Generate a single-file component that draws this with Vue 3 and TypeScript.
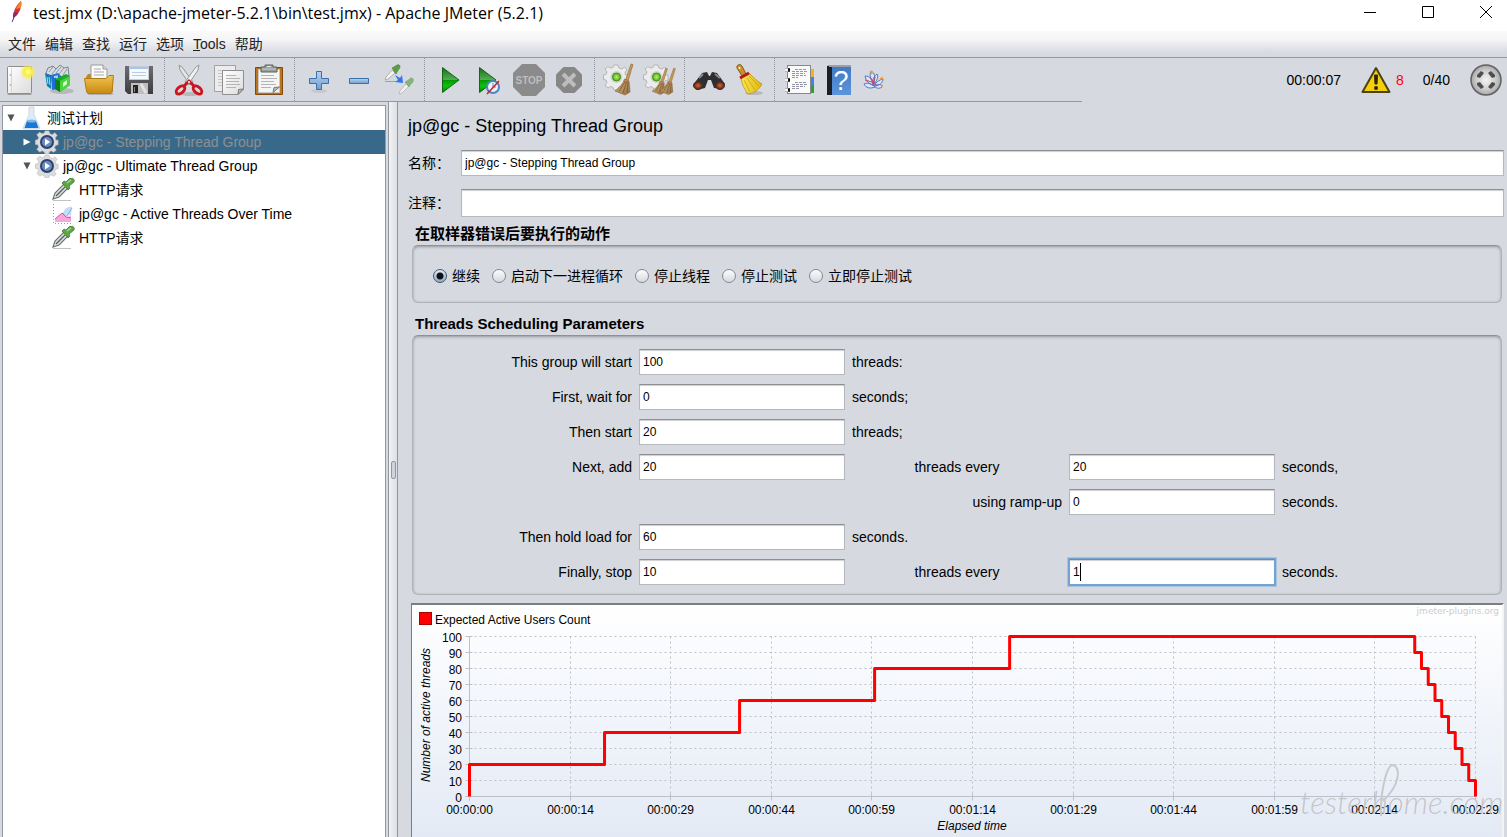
<script setup lang="ts">
import { computed, reactive, ref } from 'vue'

const menus = ['文件', '编辑', '查找', '运行', '选项', 'Tools', '帮助']

const toolGroups: string[][] = [
  ['new', 'templates', 'open', 'save'],
  ['cut', 'copy', 'paste'],
  ['expand', 'collapse', 'toggle'],
  ['start', 'start-now', 'stop', 'shutdown'],
  ['clear', 'clear-all'],
  ['search', 'reset-search'],
  ['functions', 'help', 'about'],
]

interface TreeNode {
  label: string
  depth: number
  icon: 'plan' | 'group' | 'request' | 'graph'
  open?: boolean
  selected?: boolean
}

const tree: TreeNode[] = [
  { label: '测试计划', depth: 0, icon: 'plan', open: true },
  { label: 'jp@gc - Stepping Thread Group', depth: 1, icon: 'group', open: false, selected: true },
  { label: 'jp@gc - Ultimate Thread Group', depth: 1, icon: 'group', open: true },
  { label: 'HTTP请求', depth: 2, icon: 'request' },
  { label: 'jp@gc - Active Threads Over Time', depth: 2, icon: 'graph' },
  { label: 'HTTP请求', depth: 2, icon: 'request' },
]

const name = ref('jp@gc - Stepping Thread Group')
const comment = ref('')
const onError = ref('继续')
const errorActions = ['继续', '启动下一进程循环', '停止线程', '停止测试', '立即停止测试']

const form = reactive({
  total: '100',
  delay: '0',
  first: '20',
  add: '20',
  addEvery: '20',
  rampUp: '0',
  hold: '60',
  stop: '10',
  stopEvery: '1',
})

const left = 57.5
const right = 1063.5
const top = 31.5
const bottom = 191.5
const duration = 149

const xAt = (seconds: number) => left + (seconds / duration) * (right - left)
const yAt = (threads: number) => bottom - (threads / 100) * (bottom - top)

const yTicks = Array.from({ length: 11 }, (_, i) => ({ value: i * 10, y: yAt(i * 10) }))

const xTicks = Array.from({ length: 11 }, (_, i) => {
  const s = Math.floor((duration * i) / 10)
  const mm = String(Math.floor(s / 60)).padStart(2, '0')
  const ss = String(s % 60).padStart(2, '0')
  return { label: `00:${mm}:${ss}`, x: Math.floor(left + ((right - left) * i) / 10) + 0.5 }
})

const line = computed(() => {
  const pts: [number, number][] = [[0, 0]]
  let n = 0
  let t = 0
  while (n < 100) {
    pts.push([t, n + 20])
    n += 20
    t += 20
    if (n < 100) pts.push([t, n])
  }
  t = 140
  pts.push([t, 100])
  for (n = 90; n >= 10; n -= 10) {
    pts.push([t, n], [t + 1, n])
    t += 1
  }
  pts.push([duration, 0])
  return pts.map(([s, v]) => `${xAt(s)},${yAt(v)}`).join(' ')
})
</script>

<template>
  <div class="window">
    <header class="titlebar">
      <svg class="app-icon" width="12" height="22" viewBox="0 0 12 22">
        <path d="M1 21 L4 14" stroke="#5b2d86" stroke-width="1" fill="none" />
        <path d="M2 17 C2 12 4 5 10 0 C11 3 10 9 6 14 Z" fill="#d6303a" />
        <path d="M5 8 C6 5 8 2 10 0 C11 2 10 5 10 7 Z" fill="#f08a24" />
        <path d="M2 17 C2 15 2 13 3 11 L7 12 L5 15 Z" fill="#8c2a6b" />
      </svg>
      <span class="title">test.jmx (D:\apache-jmeter-5.2.1\bin\test.jmx) - Apache JMeter (5.2.1)</span>
      <div class="window-buttons">
        <button type="button" aria-label="Minimize"><svg width="12" height="12"><path d="M0 6.5H12" /></svg></button>
        <button type="button" aria-label="Maximize"><svg width="12" height="12"><path d="M.5 .5H11.5V11.5H.5Z" /></svg></button>
        <button type="button" aria-label="Close"><svg width="12" height="12"><path d="M0 0L12 12M12 0L0 12" /></svg></button>
      </div>
    </header>

    <nav class="menubar">
      <button v-for="m in menus" :key="m" type="button">
        <template v-if="m === 'Tools'"><u>T</u>ools</template>
        <template v-else>{{ m }}</template>
      </button>
    </nav>

    <div class="toolbar">
      <svg class="defs" width="0" height="0" aria-hidden="true">
        <defs>
          <linearGradient id="gPaper" x1="0" y1="0" x2="1" y2="1"><stop offset="0" stop-color="#fff" /><stop offset="1" stop-color="#dcdcdc" /></linearGradient>
          <linearGradient id="gFolder" x1="0" y1="0" x2="0" y2="1"><stop offset="0" stop-color="#f0c350" /><stop offset="1" stop-color="#c98a10" /></linearGradient>
          <linearGradient id="gDisk" x1="0" y1="0" x2="0" y2="1"><stop offset="0" stop-color="#6e6e70" /><stop offset="1" stop-color="#3c3c3e" /></linearGradient>
          <linearGradient id="gBlue" x1="0" y1="0" x2="0" y2="1"><stop offset="0" stop-color="#b9d3ec" /><stop offset="1" stop-color="#6f9fd0" /></linearGradient>
          <linearGradient id="gPlay" x1="0" y1="0" x2="0" y2="1"><stop offset="0" stop-color="#1d6b1d" /><stop offset=".48" stop-color="#4fae4f" /><stop offset=".52" stop-color="#059a05" /><stop offset=".75" stop-color="#0cc40c" /><stop offset="1" stop-color="#067306" /></linearGradient>
          <linearGradient id="gBroom" x1="0" y1="0" x2="1" y2="1"><stop offset="0" stop-color="#d6b483" /><stop offset="1" stop-color="#96703f" /></linearGradient>
          <linearGradient id="gYellow" x1="0" y1="0" x2="1" y2="0"><stop offset="0" stop-color="#fbe94e" /><stop offset="1" stop-color="#dfb512" /></linearGradient>
          <linearGradient id="gBook" x1="0" y1="0" x2="0" y2="1"><stop offset="0" stop-color="#3f77c4" /><stop offset="1" stop-color="#5c95dc" /></linearGradient>
          <radialGradient id="gSun"><stop offset="0" stop-color="#ffffa0" /><stop offset=".5" stop-color="#f9ee3a" /><stop offset="1" stop-color="#f9ee3a" stop-opacity="0" /></radialGradient>
          <radialGradient id="gGreen"><stop offset="0" stop-color="#b6f56a" /><stop offset="1" stop-color="#4fae1a" /></radialGradient>
          <radialGradient id="gLens"><stop offset="0" stop-color="#d0683a" /><stop offset="1" stop-color="#5a1d0c" /></radialGradient>
          <radialGradient id="gBall"><stop offset="0" stop-color="#f4f4f4" /><stop offset=".6" stop-color="#cfcfcf" /><stop offset=".9" stop-color="#b2b2b2" /><stop offset="1" stop-color="#8a8a8a" /></radialGradient>
          <g id="cog">
            <path d="M-2 -12H2L3 -9L6 -8L8.500 -10L11 -7L9 -5L9.500 -2H12V3L9.500 3.500L8 6L10 9L7 11L4.500 9.500L2.500 10.500L2 13H-2L-3 10.500L-5.500 9.500L-8 11L-11 8L-9 5.500L-10 3L-12.500 2.500V-2L-10 -2.500L-9 -5L-11 -8L-8 -10.500L-5.500 -9L-3 -9.500Z" />
          </g>
          <g id="broom">
            <path d="M9 -15L11 -14.500L6 2L3.500 1Z" fill="#c99a5d" stroke="#8b6330" stroke-width=".6" />
            <path d="M2.500 0L7 2L8 13L3 16L-7 12C-3 9 1 5 2.500 0Z" fill="url(#gBroom)" stroke="#80602f" stroke-width=".6" />
            <path d="M3 3L-3 12M4.500 3L1 14M6 4L5 14" stroke="#6e4f26" stroke-width=".7" fill="none" />
            <path d="M2 2L7 4" stroke="#b5524a" stroke-width="1" />
          </g>
          <g id="dropper">
            <path d="M1 20L3 14L12 5L16 9L7 18Z" fill="#dfe4e4" stroke="#6c7474" stroke-width="1.200" />
            <path d="M4 17L13 8" stroke="#59615f" stroke-width="1.500" />
            <path d="M10 4L12 2L14 3L18 -1C21 -2 23 1 22 3L17 7L18 9L16 11Z" fill="#5fa548" stroke="#3f7d2c" stroke-width=".8" />
            <path d="M15 4L19 1" stroke="#a4d78f" stroke-width="1.500" />
          </g>
        </defs>
      </svg>

      <div class="tools">
        <div v-for="(group, gi) in toolGroups" :key="gi" class="tool-group">
          <button v-for="tool in group" :key="tool" type="button" class="tool" :class="tool" :aria-label="tool">
            <svg v-if="tool === 'new'" viewBox="0 0 32 32">
              <path d="M3.500 30.500H27.500" stroke="#777" opacity=".6" />
              <rect x="3.500" y="2.500" width="24" height="27" rx="1" fill="url(#gPaper)" stroke="#8d8d8d" />
              <path d="M7.500 4V28" stroke="#d5d5d5" /><circle cx="6.500" cy="11" r="1" fill="#bbb" /><circle cx="6.500" cy="21" r="1" fill="#bbb" />
              <circle cx="24" cy="8" r="8" fill="url(#gSun)" />
            </svg>
            <svg v-else-if="tool === 'templates'" viewBox="0 0 32 32">
              <ellipse cx="18" cy="27" rx="12" ry="3" fill="#888" opacity=".4" />
              <path d="M2 9L4 4L9 2L12 5L16 1L20 4L24 3L25 12L13 15L3 12Z" fill="#d8dde2" stroke="#76828e" />
              <path d="M5 8L9 3M8 10L12 5M12 9L17 3M15 10L20 4M19 11L23 5" stroke="#8c98a3" stroke-width="1" />
              <path d="M1 9L7 11V25L3 22Z" fill="#147bb0" /><path d="M3 13L4 20M5 13L6 21" stroke="#90dff5" stroke-width="1" />
              <path d="M7 11L14 9L17 12V24L8 26Z" fill="#1c6fd6" /><path d="M10 13L13 12.500V20" stroke="#a9d4ff" stroke-width="2" fill="none" />
              <path d="M11 15L22 10L26 12V21L16 28L11 25Z" fill="#1faa2b" /><path d="M11 15L16 17V28L11 25Z" fill="#0e7f1b" /><path d="M16 17L26 12V21L16 28Z" fill="#4bd53d" /><path d="M19 19L23 16V20L19 23Z" fill="#d9fbcf" />
            </svg>
            <svg v-else-if="tool === 'open'" viewBox="0 0 32 32">
              <path d="M2 29H30L28 31H5Z" fill="#777" opacity=".4" />
              <path d="M2 13L4 10H11L13 13H29V28H2Z" fill="#c18a1c" />
              <path d="M7 1H19L23 5V17H7Z" fill="#fafafa" stroke="#999" /><path d="M19 1V5H23" fill="#ddd" stroke="#999" />
              <path d="M10 5H17M10 8H20M10 11H20" stroke="#aaa" />
              <path d="M0.500 14.500H22L25 11.500H29.500L28 28Q27.500 29.500 26 29.500H5Q3 29.500 2.500 27Z" fill="url(#gFolder)" stroke="#b17d12" />
            </svg>
            <svg v-else-if="tool === 'save'" viewBox="0 0 32 32">
              <path d="M1 2H29V30H4L1 27Z" fill="url(#gDisk)" />
              <rect x="5.500" y="2.500" width="19" height="13" fill="#f4f8ff" stroke="#c2cbd8" /><path d="M6 4H24" stroke="#a9c6ea" stroke-width="2" /><path d="M8 8.500H22M8 11.500H22" stroke="#bccbe0" />
              <rect x="7" y="19" width="17" height="11" fill="#bebebe" /><rect x="9" y="21" width="5" height="8" fill="#222" /><path d="M10.500 23V28" stroke="#888" /><path d="M17 20L22 29" stroke="#e2e2e2" stroke-width="3" />
            </svg>
            <svg v-else-if="tool === 'cut'" viewBox="0 0 32 32">
              <ellipse cx="16" cy="30" rx="9" ry="2" fill="#888" opacity=".4" />
              <path d="M5 1L8 3L19 18L16 21L6 6Z" fill="#e3e6e6" stroke="#949898" /><path d="M25 1L22 3L11 18L14 21L24 6Z" fill="#f1f3f3" stroke="#949898" />
              <ellipse cx="6.500" cy="26" rx="3" ry="5" transform="rotate(50 6.500 26)" fill="none" stroke="#cb1620" stroke-width="3" /><ellipse cx="23.500" cy="26" rx="3" ry="5" transform="rotate(-50 23.500 26)" fill="none" stroke="#cb1620" stroke-width="3" />
              <path d="M10 22L15 17L20 22" fill="none" stroke="#cb1620" stroke-width="3" /><circle cx="15" cy="18" r="1" fill="#fff" />
            </svg>
            <svg v-else-if="tool === 'copy'" viewBox="0 0 32 32">
              <path d="M.5 1.500H21.500V27.500H.5Z" fill="#ececec" stroke="#a2a2a2" /><path d="M4 6.500H16M4 9.500H8M4 12.500H8M4 15.500H8M4 18.500H8M4 21.500H8" stroke="#c5c5c5" />
              <path d="M8.500 6.500H29.500V25L24 30.500H8.500Z" fill="url(#gPaper)" stroke="#8e8e8e" /><path d="M12 11.500H22M12 14.500H26M12 17.500H25M12 20.500H26M12 23.500H22" stroke="#b4b4b4" /><path d="M24 30.500L24.500 25.500L29.500 25Z" fill="#bbb" stroke="#777" />
            </svg>
            <svg v-else-if="tool === 'paste'" viewBox="0 0 32 32">
              <path d="M1.500 3.500H28.500V30.500H1.500Z" fill="#b9741c" stroke="#80490b" /><path d="M4.500 5.500H25.500V28.500H4.500Z" fill="#f5f5f5" stroke="#c9c9c9" />
              <path d="M7 11.500H20M7 14.500H23M7 17.500H20M7 20.500H22M7 23.500H17" stroke="#b4b4b4" /><path d="M19 28.500L20 23.500L25.500 23Z" fill="#bbb" stroke="#777" />
              <path d="M11 1H19V3H23V8H7V3H11Z" fill="#9aa09a" stroke="#5b605b" /><path d="M8 5H22" stroke="#c6cac6" /><path d="M13 2.500H17" stroke="#e9e9e9" />
            </svg>
            <svg v-else-if="tool === 'expand'" viewBox="0 0 32 32">
              <ellipse cx="15" cy="27" rx="8" ry="2" fill="#999" opacity=".25" />
              <path d="M12.500 7.500H17.500V14.500H24.500V19.500H17.500V25.500H12.500V19.500H5.500V14.500H12.500Z" fill="url(#gBlue)" stroke="#396fad" />
            </svg>
            <svg v-else-if="tool === 'collapse'" viewBox="0 0 32 32"><path d="M5.500 14.500H24.500V19.500H5.500Z" fill="url(#gBlue)" stroke="#396fad" /></svg>
            <svg v-else-if="tool === 'toggle'" viewBox="0 0 32 32">
              <path d="M1 17.500H15" stroke="#888" opacity=".7" />
              <path d="M1 16L2 13L8 6L11 9L4 15Z" fill="#f3f3f3" stroke="#a2a2a2" stroke-width=".8" /><path d="M8 4L10 3L13 1C16 0 17 3 15 5L13 8L12 10Z" fill="#5a9e46" stroke="#477e38" stroke-width=".6" />
              <path d="M15 30L16 27L22 20L25 22L18 29Z" fill="#f2f2f2" stroke="#b4b4b4" stroke-width=".8" /><path d="M21 18L23 17L27 14C30 14 30 17 28 19L26 21L25 23Z" fill="#86b57c" stroke="#76a06c" stroke-width=".6" />
              <path d="M11 11L16 14L18 11L19 19L11 18L14 16Z" fill="#2f77ee" />
            </svg>
            <svg v-else-if="tool === 'start'" viewBox="0 0 32 32"><path d="M8.500 3.500L25 16L8.500 28.500Z" fill="url(#gPlay)" stroke="#14661a" /></svg>
            <svg v-else-if="tool === 'start-now'" viewBox="0 0 32 32">
              <path d="M5.500 3.500L22 16L5.500 28.500Z" fill="url(#gPlay)" stroke="#14661a" />
              <circle cx="19" cy="23" r="6" fill="#e9f1fb" stroke="#4d86c6" stroke-width="2" /><path d="M19 19V23H22" fill="none" stroke="#888" /><path d="M13 30L25 17" stroke="#d02020" stroke-width="1.500" />
            </svg>
            <svg v-else-if="tool === 'stop'" viewBox="0 0 32 32">
              <path d="M8 0H22L31 9V23L22 32H8L-1 23V9Z" fill="#8b8b8b" />
              <text x="15" y="20" text-anchor="middle" class="stop-text">STOP</text>
            </svg>
            <svg v-else-if="tool === 'shutdown'" viewBox="0 0 32 32">
              <path d="M9.500 3H20.500L28 10.500V21.500L20.500 29H9.500L2 21.500V10.500Z" fill="#878787" /><path d="M9 10L21 22M21 10L9 22" stroke="#bdbdbd" stroke-width="4" />
            </svg>
            <svg v-else-if="tool === 'clear'" viewBox="0 0 32 32">
              <use href="#cog" x="12" y="13" fill="#ececec" stroke="#a9a9a9" stroke-width=".8" /><circle cx="12.500" cy="13" r="6" fill="#cfd3cc" /><circle cx="12.500" cy="13" r="4" fill="url(#gGreen)" stroke="#4b8e24" />
              <use href="#broom" x="18" y="15" />
            </svg>
            <svg v-else-if="tool === 'clear-all'" viewBox="0 0 32 32">
              <use href="#cog" x="12" y="13" fill="#ececec" stroke="#a9a9a9" stroke-width=".8" /><circle cx="12.500" cy="13" r="6" fill="#cfd3cc" /><circle cx="12.500" cy="13" r="4" fill="url(#gGreen)" stroke="#4b8e24" />
              <g transform="translate(14 17) scale(.85)"><use href="#broom" /></g><g transform="translate(22 17) scale(.85)"><use href="#broom" /></g>
            </svg>
            <svg v-else-if="tool === 'search'" viewBox="0 0 32 32">
              <path d="M8 9L13 8L15 12H16L18 8L23 9L31 20L28 25L20 24L17 16H14L11 24L3 26L-1 21Z" fill="#2e2e30" />
              <path d="M5 14L9 10M21 10L26 14" stroke="#8c8c90" stroke-width="2" />
              <ellipse cx="4" cy="21.500" rx="4.500" ry="4" fill="url(#gLens)" stroke="#333" /><ellipse cx="26" cy="21.500" rx="4.500" ry="4" fill="url(#gLens)" stroke="#333" />
            </svg>
            <svg v-else-if="tool === 'reset-search'" viewBox="0 0 32 32">
              <ellipse cx="20" cy="29" rx="9" ry="2" fill="#888" opacity=".4" />
              <path d="M3 4C2 1 6 -1 8 2L12 10L8 12Z" fill="#c8912f" stroke="#8a5d17" /><circle cx="5.500" cy="4" r="1" fill="#fff" />
              <path d="M7 14L15 9C19 13 23 17 28 20C25 26 20 29 14 30C10 25 8 20 7 14Z" fill="url(#gYellow)" stroke="#b58d10" stroke-width=".7" /><path d="M10 16L16 28M13 14L21 26M15 12L25 22" stroke="#c9a31c" stroke-width=".8" fill="none" />
              <path d="M6 14L15 9" stroke="#b51919" stroke-width="3" />
            </svg>
            <svg v-else-if="tool === 'functions'" viewBox="0 0 32 32">
              <path d="M26 5H30V13H26Z" fill="#f3b321" /><path d="M26 13H30V21H26Z" fill="#3c86e8" /><path d="M26 21H30V29H26Z" fill="#23a634" />
              <rect x="3.500" y="1.500" width="23" height="28" fill="#fafafa" stroke="#888" />
              <path d="M11 5.500H22M8 7.500H23M8 9.500H21M8 11.500H22M8 13.500H14M11 18.500H22M8 20.500H23M8 22.500H21M8 24.500H16" stroke="#7a7d94" stroke-dasharray="3 1" stroke-width=".8" />
              <path d="M1 6H6M1 16H6M1 26H6" stroke="#777" stroke-width="4" /><path d="M1 6H4M1 16H4M1 26H4" stroke="#f5f5f5" stroke-width="3" /><path d="M4 6H6M4 16H6M4 26H6" stroke="#111" stroke-width="3" />
            </svg>
            <svg v-else-if="tool === 'help'" viewBox="0 0 32 32">
              <path d="M3 2L6 1H27V31H3Z" fill="url(#gBook)" /><path d="M3 2H8V31H3Z" fill="#1c2025" /><path d="M5 1H27V3H5Z" fill="#9c9fa6" />
              <text x="17" y="26" text-anchor="middle" class="help-text">?</text>
            </svg>
            <svg v-else viewBox="0 0 32 32">
              <g fill="#dbe4f8" stroke="#5674bd" stroke-width="1"><path d="M8 7C12 9 13 13 10 20C8 15 6 12 8 7ZM14 10C16 12 14 17 10 21C9 16 11 12 14 10ZM2 12C7 12 10 16 11 21C6 21 3 17 2 12ZM1 20C5 18 9 20 12 23C7 25 3 24 1 20ZM20 15C20 19 16 22 11 22C13 18 16 16 20 15ZM20 22C17 25 14 25 11 22C14 20 17 20 20 22Z" /></g>
              <path d="M2 16L12 19M7 13L14 22M12 13L10 22" stroke="#c24a64" stroke-width="1" /><path d="M8 7L9 10M17 15L20 14M18 22H20" stroke="#ef9a3a" stroke-width="2" />
            </svg>
          </button>
        </div>
      </div>

      <div class="status">
        <span class="elapsed">00:00:07</span>
        <button type="button" class="errors" aria-label="Show log">
          <svg width="30" height="28" viewBox="0 0 30 28">
            <path d="M15 2L28.500 26H1.500Z" fill="#f6cf0b" stroke="#4a4314" stroke-width="2" stroke-linejoin="round" />
            <path d="M13.500 9H16.500L16 18H14Z" fill="#2b2608" stroke="#2b2608" /><circle cx="15" cy="22" r="2" fill="#2b2608" />
          </svg>
          <span>8</span>
        </button>
        <span class="threads">0/40</span>
        <svg width="32" height="32" viewBox="0 0 32 32">
          <circle cx="16" cy="16" r="15" fill="url(#gBall)" stroke="#626262" stroke-width="1.500" />
          <g fill="#4e4e4e"><path d="M7 11L11 7L14 9L10 14L7 13ZM18 9L21 7L25 11V13L22 14ZM7 19L10 18L14 23L11 25L7 21ZM22 18L25 19V21L21 25L18 23Z" /></g>
        </svg>
      </div>
    </div>

    <div class="body">
      <div class="tree" role="tree">
        <div
          v-for="(node, i) in tree"
          :key="i"
          role="treeitem"
          class="node"
          :class="[`depth-${node.depth}`, { selected: node.selected }]"
        >
          <button v-if="node.open !== undefined" type="button" class="twist" :aria-label="node.label">
            <svg width="8" height="8" viewBox="0 0 8 8"><path :d="node.open ? 'M.5 .5H7.5L4 7.5Z' : 'M.5 .5V7.5L7.500 4Z'" /></svg>
          </button>
          <span v-else class="twist"></span>
          <svg class="node-icon" width="24" height="24" viewBox="0 0 24 24">
            <g v-if="node.icon === 'plan'">
              <path d="M10 1H15V9L21 22Q21 23 20 23H5Q4 23 4 22L10 9Z" fill="#dfeaf5" stroke="#c6d2dd" stroke-width=".8" /><path d="M8 15H17L19.500 22H5.500Z" fill="#1878d2" /><ellipse cx="12.500" cy="15" rx="4.500" ry="1.500" fill="#76b8f0" />
            </g>
            <g v-else-if="node.icon === 'group'">
              <g transform="translate(12 12) scale(.92)"><use href="#cog" fill="#dcdcdc" stroke="#c0c0c0" stroke-width=".8" /></g>
              <circle cx="12" cy="12" r="6" fill="#6f8bb8" stroke="#2a4273" stroke-width="2" /><path d="M10 8.500L15 12L10 15.500Z" fill="#fff" />
            </g>
            <g v-else-if="node.icon === 'request'">
              <path d="M2 22.500H20" stroke="#999" opacity=".6" /><use href="#dropper" x="1" y="1" />
            </g>
            <g v-else>
              <path d="M2.500 2V21.500H22" fill="none" stroke="#999" stroke-dasharray="1 2" /><path d="M4 20V17L11 11L15 15L20 14V20Z" fill="#f6a8dc" /><path d="M4 17L11 11L15 15L20 16" fill="none" stroke="#e0559a" /><path d="M12 11C14 6 17 4 21 5L20 14Z" fill="#c3dcf8" /><path d="M12 11L16 14L21 6" fill="none" stroke="#86b2ea" />
            </g>
          </svg>
          <span class="label">{{ node.label }}</span>
        </div>
      </div>

      <div class="splitter"><span class="grip"></span></div>

      <main class="content">
        <h1>jp@gc - Stepping Thread Group</h1>
        <div class="row">
          <label for="name">名称：</label>
          <input id="name" v-model="name" type="text" class="field" />
        </div>
        <div class="row comment">
          <label for="comment">注释：</label>
          <input id="comment" v-model="comment" type="text" class="field" />
        </div>

        <h2 class="first">在取样器错误后要执行的动作</h2>
        <div class="box radios" role="radiogroup">
          <label v-for="a in errorActions" :key="a">
            <input v-model="onError" type="radio" name="on-error" :value="a" />{{ a }}
          </label>
        </div>

        <h2>Threads Scheduling Parameters</h2>
        <form class="box params" @submit.prevent>
          <label for="total" class="c1">This group will start</label>
          <input id="total" v-model="form.total" class="field c2" type="text" />
          <span class="c3">threads:</span>

          <label for="delay" class="c1">First, wait for</label>
          <input id="delay" v-model="form.delay" class="field c2" type="text" />
          <span class="c3">seconds;</span>

          <label for="first" class="c1">Then start</label>
          <input id="first" v-model="form.first" class="field c2" type="text" />
          <span class="c3">threads;</span>

          <label for="add" class="c1">Next, add</label>
          <input id="add" v-model="form.add" class="field c2" type="text" />
          <label for="add-every" class="c3 mid">threads every</label>
          <input id="add-every" v-model="form.addEvery" class="field c4" type="text" />
          <span class="c5">seconds,</span>

          <label for="ramp" class="c3 end">using ramp-up</label>
          <input id="ramp" v-model="form.rampUp" class="field c4" type="text" />
          <span class="c5">seconds.</span>

          <label for="hold" class="c1">Then hold load for</label>
          <input id="hold" v-model="form.hold" class="field c2" type="text" />
          <span class="c3">seconds.</span>

          <label for="stop" class="c1">Finally, stop</label>
          <input id="stop" v-model="form.stop" class="field c2" type="text" />
          <label for="stop-every" class="c3 mid">threads every</label>
          <div class="c4 active">
            <input id="stop-every" v-model="form.stopEvery" class="field" type="text" />
            <i class="caret"></i>
          </div>
          <span class="c5">seconds.</span>
        </form>

        <div class="chart">
          <svg viewBox="0 0 1090 232" role="img" aria-label="Expected Active Users Count">
            <rect x="7.500" y="7.500" width="12" height="12" fill="#f00" stroke="#a00" />
            <text x="23" y="19">Expected Active Users Count</text>
            <text x="1087" y="9" text-anchor="end" class="credit">jmeter-plugins.org</text>
            <g class="grid">
              <line v-for="t in yTicks.slice(1)" :key="t.value" :x1="left" :x2="right" :y1="t.y" :y2="t.y" />
              <line v-for="t in xTicks.slice(1)" :key="t.label" :x1="t.x" :x2="t.x" :y1="top" :y2="bottom" />
            </g>
            <g class="axis">
              <line :x1="left" :x2="left" :y1="top" :y2="bottom + 4" />
              <line :x1="left - 4" :x2="right" :y1="bottom" :y2="bottom" />
              <line v-for="t in yTicks" :key="t.value" :x1="left - 4" :x2="left + 3" :y1="t.y" :y2="t.y" />
              <line v-for="t in xTicks" :key="t.label" :x1="t.x" :x2="t.x" :y1="bottom - 3" :y2="bottom + 4" />
            </g>
            <text v-for="t in yTicks" :key="t.value" x="50" :y="t.y + 5" text-anchor="end">{{ t.value }}</text>
            <text v-for="t in xTicks" :key="t.label" :x="t.x" y="209" text-anchor="middle">{{ t.label }}</text>
            <text x="560" y="225" text-anchor="middle" class="it">Elapsed time</text>
            <text transform="translate(18 110) rotate(-90)" text-anchor="middle" class="it">Number of active threads</text>
            <polyline :points="line" class="series" />
            <text x="888" y="209" class="mark">testerhome.com</text>
            <path d="M969 211C968 190 974 160 981 160C989 163 988 180 971 196" class="swash" />
          </svg>
        </div>
      </main>
    </div>
  </div>
</template>

<style>
body {
  margin: 0;
  background: #d6d9df;
}
</style>

<style scoped>
.window {
  display: flex;
  flex-direction: column;
  height: 100vh;
  overflow: hidden;
  box-sizing: border-box;
  background: #d6d9df;
  color: #000;
  font: 14px/20px "Liberation Sans", "Noto Sans CJK SC", sans-serif;
}
button {
  box-sizing: border-box;
  margin: 0;
  padding: 0;
  border: 0;
  background: none;
  color: inherit;
  font: inherit;
}
.titlebar {
  display: flex;
  align-items: center;
  flex: none;
  height: 31px;
  background: #fff;
}
.app-icon {
  margin: 0 10px 8px 11px;
}
.title {
  flex: 1;
  height: 30px;
  font: 16px/24px "Open Sans", sans-serif;
}
.window-buttons {
  display: flex;
  gap: 46px;
  height: 26px;
  align-items: center;
  padding: 0 15px 8px 0;
}
.window-buttons button {
  display: flex;
}
.window-buttons path {
  fill: none;
  stroke: #000;
}
.menubar {
  display: flex;
  flex: none;
  gap: 9px;
  height: 26px;
  padding: 0 8px;
  border-bottom: 1px solid #9297a1;
  background: linear-gradient(#fafafa 0%, #f4f4f6 35%, #d9dce2 80%, #d6d9df);
  color: #222;
}
.toolbar {
  display: flex;
  flex: none;
  justify-content: space-between;
  height: 44px;
}
.defs {
  position: absolute;
}
.tools {
  display: flex;
  padding-right: 188px;
  border-bottom: 1px solid #9297a1;
}
.tool-group {
  display: flex;
}
.tool-group + .tool-group {
  padding-left: 5px;
  margin-left: 4px;
  border-left: 1px dotted #8f939c;
}
.tool {
  display: flex;
  align-items: center;
  justify-content: center;
  width: 40px;
}
.tool.about {
  width: 34px;
  padding-left: 4px;
}
.tool svg {
  flex: none;
  width: 32px;
  height: 32px;
  overflow: visible;
  fill: none;
}
.stop-text {
  font: bold 10px "Liberation Sans", sans-serif;
  fill: #bdbdbd;
}
.help-text {
  font: 27px "Liberation Sans", sans-serif;
  fill: #fff;
}
.status {
  display: flex;
  align-items: center;
  padding-right: 5px;
}
.errors {
  display: flex;
  align-items: center;
  gap: 5px;
  margin: 0 19px 0 20px;
  color: #f00;
}
.threads {
  margin-right: 20px;
}
.body {
  display: flex;
  flex: 1;
  min-height: 0;
}
.tree {
  flex: none;
  width: 382px;
  margin: 3px 0 0 2px;
  border: 1px solid #9297a1;
  border-bottom: 0;
  background: #fff;
}
.node {
  display: flex;
  align-items: center;
  height: 24px;
}
.depth-1 {
  padding-left: 16px;
}
.depth-2 {
  padding-left: 32px;
}
.twist {
  display: flex;
  box-sizing: border-box;
  width: 16px;
  padding-left: 4px;
  fill: #555;
}
.selected {
  background: #39698a;
  color: #8e8f91;
}
.selected .twist {
  fill: #fff;
}
.node-icon {
  margin-right: 4px;
}
.label {
  white-space: nowrap;
}
.splitter {
  display: flex;
  align-items: center;
  justify-content: center;
  flex: none;
  width: 8px;
  margin-left: 2px;
  border: solid #9297a1;
  border-width: 0 1px;
  background: linear-gradient(90deg, #f2f3f5, #dcdfe4);
}
.grip {
  width: 3px;
  height: 16px;
  border: 1px solid #9297a1;
  border-radius: 2px;
  background: #d0d3da;
}
.content {
  display: flex;
  flex: 1;
  flex-direction: column;
  min-width: 0;
  padding: 12px 3px 0 10px;
}
h1 {
  margin: 0 0 12px;
  font-size: 18px;
  font-weight: 400;
  line-height: 24px;
}
.row {
  display: flex;
  align-items: center;
  height: 26px;
}
.row label {
  width: 53px;
}
.row.comment {
  height: 28px;
  margin-top: 13px;
}
.field {
  box-sizing: border-box;
  min-width: 0;
  width: 100%;
  height: 26px;
  padding: 0 3px;
  border: 1px solid #b5b8bd;
  border-top-color: #8d8e91;
  border-radius: 0;
  outline: 0;
  background: #fff;
  box-shadow: inset 0 1px 1px #cfcfd1;
  color: #000;
  font: 12px/16px "Liberation Sans", sans-serif;
}
.row .field {
  flex: 1;
}
.comment .field {
  height: 28px;
}
h2 {
  margin: 11px 0 1px 7px;
  font-size: 15px;
  font-weight: 700;
  line-height: 20px;
}
h2.first {
  margin-top: 7px;
}
.box {
  box-sizing: border-box;
  margin: 0 2px 0 4px;
  border: 1px solid #b0b3b9;
  border-top-color: #8e9197;
  border-radius: 6px;
  box-shadow: inset 0 2px 3px -1px #9b9ea5, inset 1px 0 2px #bfc2c8, inset -1px 0 2px #bfc2c8;
}
.radios {
  display: flex;
  align-items: center;
  gap: 12px;
  height: 58px;
  padding: 4px 20px 0;
}
.radios label {
  display: flex;
  align-items: center;
  gap: 5px;
}
.radios input {
  appearance: none;
  box-sizing: border-box;
  width: 14px;
  height: 14px;
  margin: 0;
  border: 1px solid #85888e;
  border-radius: 50%;
  background: linear-gradient(#fdfdfe, #d5d8de);
}
.radios input:checked {
  border-color: #3c5870;
  background: radial-gradient(circle, #111 0 3px, transparent 4px), linear-gradient(#e2ebf3, #8fabc4);
}
.params {
  display: grid;
  grid-template-columns: 208fr 206fr 210fr 206fr 206fr;
  grid-auto-rows: 26px;
  gap: 9px 7px;
  align-items: center;
  padding: 13px 13px 9px 11px;
}
.c1 {
  grid-column: 1;
  text-align: right;
}
.c2 {
  grid-column: 2;
}
.c3 {
  grid-column: 3;
}
.c4 {
  grid-column: 4;
}
.c5 {
  grid-column: 5;
}
.mid {
  text-align: center;
}
.end {
  text-align: right;
}
.active {
  position: relative;
  display: flex;
  box-shadow: 0 0 0 1px #73a4d1, 0 0 0 2px #a9c4df;
}
.active .field {
  border-color: #73a4d1;
  border-top-color: #6b8cab;
}
.caret {
  position: absolute;
  top: 4px;
  left: 11px;
  width: 1px;
  height: 18px;
  background: #000;
}
.chart {
  flex: 1;
  min-height: 0;
  overflow: hidden;
  margin: 8px 0 0 3px;
  border: 1px solid #a9abb0;
  border-width: 2px 2px 0 1px;
  border-top-color: #7d7d7f;
  border-left-color: #7d7d7f;
  border-right-color: #f3f4f6;
  background: linear-gradient(#fff, #e3eaf5);
}
.chart svg {
  display: block;
  width: 100%;
}
.chart text {
  font: 12px "Liberation Sans", sans-serif;
  fill: #000;
}
.chart .it {
  font-style: italic;
}
.chart .credit {
  font: 9px "DejaVu Sans", sans-serif;
  fill: #c9ccd3;
}
.chart .mark {
  font: italic 300 31px Lato, sans-serif;
  fill: #bfc0c3;
  fill-opacity: 0.9;
}
.swash {
  fill: none;
  stroke: #c8c9cb;
  stroke-width: 2;
}
.grid line {
  stroke: #bcc0cb;
  stroke-dasharray: 2 3;
}
.axis line {
  stroke: #bcc0cb;
}
.series {
  fill: none;
  stroke: #f00;
  stroke-width: 3;
  stroke-linejoin: round;
}
</style>
